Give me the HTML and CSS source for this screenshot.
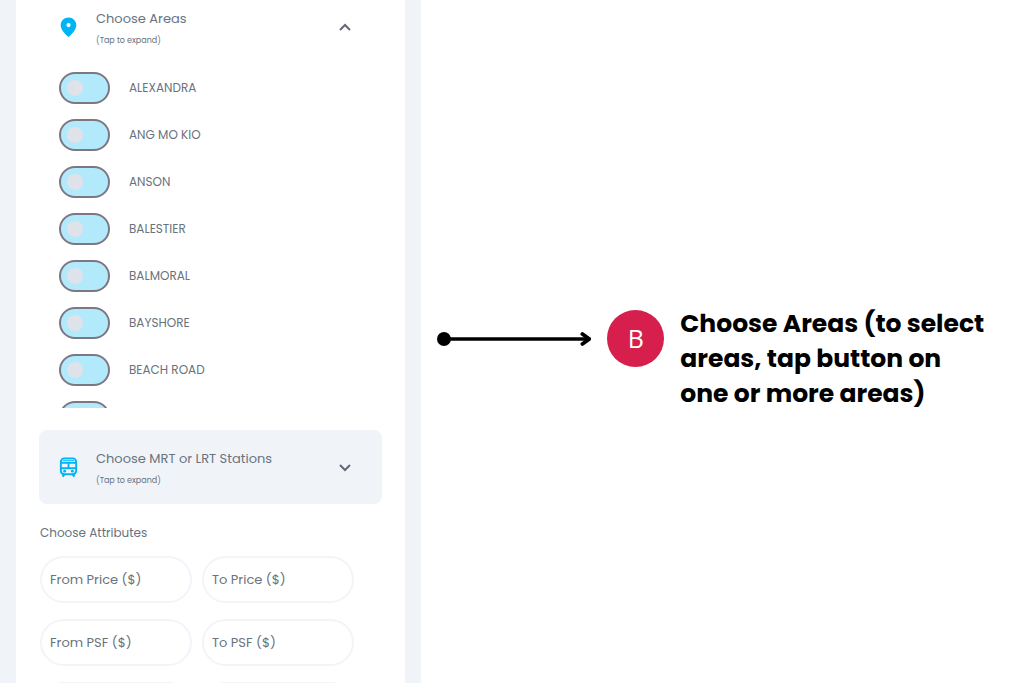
FILE: index.html
```html
<!DOCTYPE html>
<html lang="en">
<head>
    <meta charset="UTF-8">
    <meta name="viewport" content="width=device-width, initial-scale=1.0">
    <title>Choose Areas</title>
    <link rel="stylesheet" href="styles.css">
</head>
<body>
    <div class="container">
        <form class="filters">
            <button type="button" class="expand open">
                <svg class="icon" viewBox="0 0 24 24"><path fill="#00b5f5" fill-rule="evenodd" d="M12 1.500C7.500 1.500 3.800 5.200 3.800 9.700C3.800 15.500 12 22 12 22S20.200 15.500 20.200 9.700C20.200 5.200 16.500 1.500 12 1.500ZM12 7.300A2.200 2.200 0 1 1 12 11.700A2.200 2.200 0 0 1 12 7.300Z"/></svg>
                <span class="title">Choose Areas<small>(Tap to expand)</small></span>
                <svg class="arrow" viewBox="0 0 14 14"><path d="M2 10l5-5 5 5"/></svg>
            </button>
            <div class="areas">
                <label><input type="checkbox">ALEXANDRA</label>
                <label><input type="checkbox">ANG MO KIO</label>
                <label><input type="checkbox">ANSON</label>
                <label><input type="checkbox">BALESTIER</label>
                <label><input type="checkbox">BALMORAL</label>
                <label><input type="checkbox">BAYSHORE</label>
                <label><input type="checkbox">BEACH ROAD</label>
                <label><input type="checkbox"></label>
            </div>
            <button type="button" class="expand">
                <svg class="icon" viewBox="0 0 24 24" fill="none" stroke="#00b5f5" stroke-width="2">
                    <rect x="4" y="2.500" width="16" height="16.500" rx="3.500"/>
                    <path d="M4 7h16M4 12.800h16M12 7v6"/>
                    <path d="M6 4.500h12" stroke-width="1"/>
                    <path d="M7.500 19l-1.500 2.500M16.500 19l1.500 2.500" stroke-width="2.400"/>
                    <circle cx="8" cy="15.800" r="1.500" fill="#00b5f5" stroke="none"/>
                    <circle cx="16" cy="15.800" r="1.500" fill="#00b5f5" stroke="none"/>
                </svg>
                <span class="title">Choose MRT or LRT Stations<small>(Tap to expand)</small></span>
                <svg class="arrow" viewBox="0 0 14 14"><path d="M2 5l5 5 5-5"/></svg>
            </button>
            <div class="attributes">
                <h2>Choose Attributes</h2>
                <div class="fields">
                    <input type="text" placeholder="From Price ($)">
                    <input type="text" placeholder="To Price ($)">
                    <input type="text" placeholder="From PSF ($)">
                    <input type="text" placeholder="To PSF ($)">
                    <input type="text">
                    <input type="text">
                </div>
            </div>
        </form>
        <div class="note">
            <svg class="pointer" viewBox="0 0 155 16" fill="none" stroke="#000">
                <circle cx="7" cy="8" r="7" fill="#000" stroke="none"/>
                <path d="M7 8h145" stroke-width="3.600"/>
                <path d="M146 3l7 5-7 5" stroke-width="3.800" stroke-linecap="round" stroke-linejoin="round"/>
            </svg>
            <span class="badge">B</span>
            <h1>Choose Areas (to select<br>areas, tap button on<br>one or more areas)</h1>
        </div>
    </div>
</body>
</html>
```
FILE: styles.css
```css
* {
    padding: 0;
    margin: 0;
    box-sizing: border-box;
}
body {
    font-family: Poppins, Inter, sans-serif;
    color: #68737d;
    background-color: white;
}
.container {
    display: grid;
    grid-template-columns: minmax(0, 37fr) minmax(0, 53fr);
    height: 100vh;
    overflow: hidden;
}
.filters {
    border: solid #f0f4f9;
    border-width: 0 16px;
    padding: 0 23px;
}
.expand {
    display: flex;
    align-items: center;
    width: 100%;
    padding: 18px 30px 12px 18px;
    border: none;
    border-radius: 8px;
    background-color: #f0f4f9;
    font-family: inherit;
    color: inherit;
    text-align: left;
}
.open {
    padding-top: 8px;
    padding-bottom: 2px;
    background-color: white;
}
.icon {
    width: 23px;
    height: 23px;
    margin-bottom: 6px;
}
.title {
    flex: 1;
    margin-left: 16px;
    font-size: 13px;
    line-height: 22px;
}
.title small {
    display: block;
    font-size: 8px;
}
.arrow {
    width: 14px;
    height: 14px;
    margin-bottom: 6px;
    fill: none;
    stroke: #68657a;
    stroke-width: 2;
}
.areas {
    display: flex;
    flex-direction: column;
    gap: 15px;
    height: 336px;
    margin: 18px 0 22px;
    padding-left: 20px;
    overflow: hidden;
}
.areas label {
    display: flex;
    flex-shrink: 0;
    align-items: center;
    gap: 19px;
    font-size: 12px;
}
.areas input {
    display: flex;
    align-items: center;
    appearance: none;
    width: 51px;
    height: 32px;
    padding-left: 6px;
    border: 2px solid #7c7783;
    border-radius: 16px;
    background-color: #b2e9fb;
}
.areas input::before {
    content: '';
    width: 16px;
    height: 16px;
    border-radius: 50%;
    background-color: #dfe3e9;
}
.areas input:checked {
    justify-content: flex-end;
    padding-right: 6px;
}
.attributes {
    padding: 18px 28px 0 1px;
}
.attributes h2 {
    font-size: 12px;
    font-weight: 400;
    line-height: 22px;
}
.fields {
    display: grid;
    grid-template-columns: 1fr 1fr;
    gap: 16px 10px;
    margin-top: 12px;
}
.fields input {
    width: 100%;
    height: 47px;
    padding: 0 8px;
    border: 2px solid #f2f4f9;
    border-radius: 24px;
    font-family: inherit;
    font-size: 13px;
}
.fields input::placeholder {
    color: #68737d;
}
.note {
    display: flex;
    align-items: flex-start;
    gap: 16px;
    padding: 306px 35px 0 16px;
}
.pointer {
    flex: 1;
    height: 16px;
    margin-top: 25px;
}
.badge {
    width: 57px;
    margin-top: 4px;
    border-radius: 50%;
    background-color: #d61f4c;
    color: white;
    font-family: "Open Sans", sans-serif;
    font-size: 25px;
    font-weight: 400;
    line-height: 57px;
    text-align: center;
}
.note h1 {
    flex: 2;
    color: black;
    font-size: 25px;
    font-weight: 700;
    line-height: 35px;
    white-space: nowrap;
}
```
